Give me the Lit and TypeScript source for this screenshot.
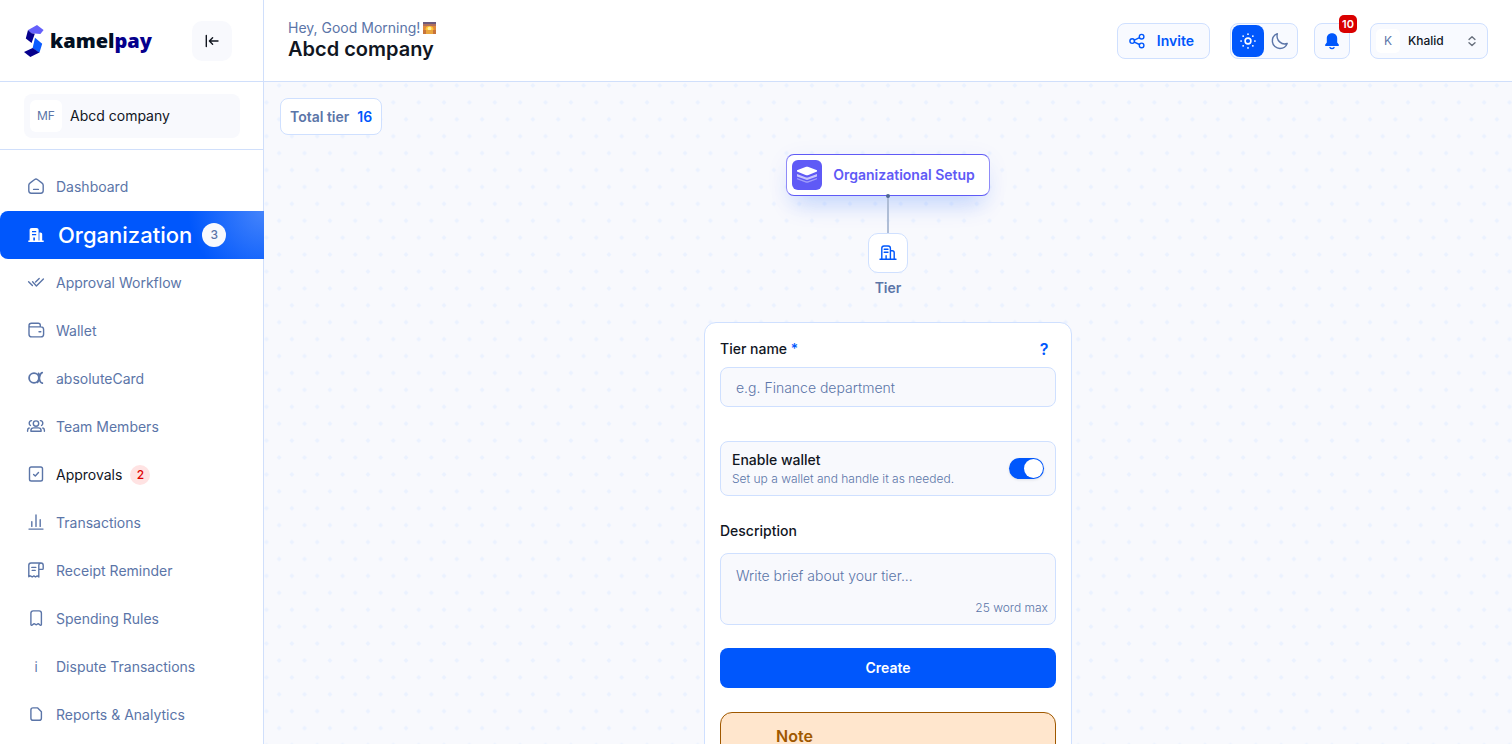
import { LitElement, html, css, svg, nothing } from "lit";
import { customElement, property, state } from "lit/decorators.js";
import { classMap } from "lit/directives/class-map.js";

const icons: Record<string, unknown> = {
  dashboard: svg`<path d="M4.800 10.200c0-.9.4-1.600 1.100-2.100l4.800-3.600c.8-.6 1.800-.6 2.600 0l4.800 3.600c.7.5 1.100 1.200 1.100 2.100v5.600c0 1.400-1 2.400-2.400 2.400H7.200c-1.400 0-2.400-1-2.400-2.400z"/><path d="M9.600 14.400h4.800"/>`,
  organization: svg`<path fill="currentColor" stroke="none" fill-rule="evenodd" d="M5.600 17.600V7.200C5.600 5.800 6.400 5 7.800 5h4.600c1.400 0 2.200.8 2.200 2.200V17.600h.8V9.400h1c1.100 0 1.800.7 1.800 1.800v6.400h1.500V19H4.300v-1.400zM8 8v1.200h4.200V8zm0 3v1.200h4.200V11zm1.300 3.600v3h1.600v-3z"/>`,
  workflow: svg`<path d="M4.600 10.800l3.800 3.800M8.600 10.800l3.800 4.200 7-7M15.200 7.400l-3.600 3.600"/>`,
  wallet: svg`<path d="M5 7.200v8c0 1.700 1 2.700 2.700 2.700h9.200c1.700 0 2.700-1 2.700-2.700v-4.600c0-1.700-1-2.700-2.700-2.700H6.200C5.500 7.900 5 7.300 5 6.600 5 5 6 4.300 7.400 4.300h6.800c1.300 0 2.100.8 2.100 2.100v1.400"/><path d="M15 12.800h1.800"/>`,
  alpha: svg`<circle cx="10" cy="11" r="4.900" stroke-width="1.800"/><path d="M18.200 5.700c-1.800.4-2.400 3-2.900 5.300-.4 2-.8 3.400-1.800 4.400M14.600 6.400c.6 1.400.5 3 .7 4.600.3 2.800 1.100 4.800 3 5.200" stroke-width="1.800"/>`,
  team: svg`<circle cx="12" cy="8.600" r="2.700"/><path d="M6.900 16.200v-.8c0-1.500 1.200-2.500 2.700-2.500h4.800c1.500 0 2.700 1 2.700 2.500v.8zM7.600 5.600c-1.700.2-2.400 1.400-2.400 2.600 0 1 .5 1.800 1.300 2.300M16.400 5.600c1.700.2 2.400 1.400 2.400 2.600 0 1-.5 1.800-1.300 2.300M3.600 16.200v-1c0-1.100.6-1.800 1.600-2.200M20.400 16.200v-1c0-1.100-.6-1.800-1.600-2.200"/>`,
  approvals: svg`<rect x="5.500" y="4" width="13" height="14" rx="1.800"/><path d="M9.600 11.400l1.700 1.600 3.200-3.400"/>`,
  transactions: svg`<path d="M5 18.100h14M7.800 10.600v4.800M12 4v11.400M16.200 8.800v6.600"/>`,
  receipt: svg`<path d="M14.800 18V6.200c0-1.200.8-2.200 2.200-2.200H7C5.500 4 4.800 4.900 4.800 6.300v11.400l1.700-.8 1.700 1.100 1.700-1.100 1.600 1.100 1.700-1.100zM17 4c1.400 0 2.200.9 2.200 2.200V9.500c0 .6-.3.900-.9.900h-3.500M7.800 8.400h4M8.200 11.400h3"/>`,
  bookmark: svg`<path d="M6.900 6.200c0-1.400.8-2.300 2.300-2.300h5.900c1.500 0 2.300.9 2.300 2.300v11.300c0 .8-.5 1-1.100.7-.9-.6-1.300-1.500-2.100-1.500-.9 0-1.300 1.100-2 1.100s-1.200-1.100-2-1.100-1.300.9-2.200 1.500c-.6.3-1.100.1-1.100-.7z"/>`,
  reports: svg`<path d="M6.900 7c0-1.300.8-2.100 2.100-2.100h4.700l3.700 3.800v6.500c0 1.300-.8 2.100-2.100 2.100H9c-1.300 0-2.100-.8-2.100-2.100z"/>`,
  tier: svg`<path d="M4 18.300h16M5.800 18.300V7.200c0-1.500.7-2.200 2.200-2.200h4.200c1.500 0 2.200.7 2.200 2.200v11.100M14.400 9.800h1.800c1.300 0 2 .7 2 2v6.500M8.200 8.300h3.800M8.200 11.300h3.800M10.100 18.300v-3.500"/>`,
  collapse: svg`<path d="M6.300 6.500v11M9.600 12h8.400M12.600 8.800L9.400 12l3.200 3.200"/>`,
  share: svg`<circle cx="7.200" cy="12.100" r="2.300"/><circle cx="16.600" cy="7.700" r="2.300"/><circle cx="16.600" cy="16.400" r="2.300"/><path d="M9.300 11.100l5.200-2.400M9.300 13.100l5.200 2.400"/>`,
  sun: svg`<circle cx="12" cy="12" r="2.900" stroke-width="1.600"/><path stroke-width="1.700" d="M12 5v.2M12 18.800v.2M5 12h.2M18.800 12h.2M7.100 7.100l.1.100M16.800 16.800l.1.100M16.900 7.100l-.1.100M7.200 16.800l-.1.100"/>`,
  moon: svg`<path d="M9.300 4.600C5.800 6.200 4 9.500 4.400 12.800c.5 3.800 3.700 6.700 7.500 6.700 3.300 0 6.200-2 7.300-5-5.300 1.900-11.500-2.900-9.900-9.900z"/>`,
  bell: svg`<path fill="currentColor" stroke="none" d="M12 4.200c-3.200 0-5.200 2.200-5.200 5.200v4.100l-1.500 2c-.5.800-.2 1.500.8 1.500h11.800c1 0 1.300-.7.8-1.500l-1.500-2V9.400c0-3-2-5.200-5.200-5.200z"/><path d="M10 18.600c.8 1.200 3.200 1.200 4 0"/>`,
  updown: svg`<path d="M9 10.400L12 7.700l3 2.700M9 13.800l3 2.700 3-2.700"/>`,
};

@customElement("ui-icon")
class UiIcon extends LitElement {
  static styles = css`
    :host { display: block; flex: none; width: 24px; height: 24px; }
    .glyph { display: block; fill: none; stroke: currentColor; stroke-width: 1.4; stroke-linecap: round; stroke-linejoin: round; }
  `;
  @property() name = "";
  render() {
    return html`<svg class="glyph" width="24" height="24" viewBox="0 0 24 24" aria-hidden="true">${icons[this.name] ?? nothing}</svg>`;
  }
}

interface NavItem { label: string; icon: string; count?: number; active?: boolean; alert?: boolean }

const navItems: NavItem[] = [
  { label: "Dashboard", icon: "dashboard" },
  { label: "Organization", icon: "organization", count: 3, active: true },
  { label: "Approval Workflow", icon: "workflow" },
  { label: "Wallet", icon: "wallet" },
  { label: "absoluteCard", icon: "alpha" },
  { label: "Team Members", icon: "team" },
  { label: "Approvals", icon: "approvals", count: 2, alert: true },
  { label: "Transactions", icon: "transactions" },
  { label: "Receipt Reminder", icon: "receipt" },
  { label: "Spending Rules", icon: "bookmark" },
  { label: "Dispute Transactions", icon: "" },
  { label: "Reports & Analytics", icon: "reports" },
];

@customElement("app-sidebar")
class AppSidebar extends LitElement {
  static styles = css`
    :host { display: flex; flex-direction: column; box-sizing: border-box; min-height: 0; border-right: 1px solid #d0dffb; background: #fff; }
    * { box-sizing: border-box; }
    .brand { flex: none; height: 82px; display: flex; align-items: center; justify-content: space-between; padding: 0 31px 0 24px; border-bottom: 1px solid #d0dffb; }
    .logo { display: flex; align-items: center; gap: 6px; color: #020f22; text-decoration: none; font: 800 20px/32px "Open Sans", "Noto Sans", sans-serif; }
    .pay { color: #06008c; }
    .collapse { width: 40px; height: 40px; display: grid; place-items: center; padding: 0; border: 0; border-radius: 10px; background: #f8f9fd; color: #11161f; }
    .company { flex: none; height: 68px; padding: 12px 23px 11px 24px; border-bottom: 1px solid #d0dffb; }
    .workspace { width: 100%; height: 44px; display: flex; align-items: center; gap: 8px; padding: 6px; border: 0; border-radius: 8px; background: #f8f9fd; color: #11161f; font: 400 14px/20px Inter, sans-serif; }
    .initials { width: 32px; height: 32px; display: grid; place-items: center; border-radius: 6px; background: #fff; color: #5b75a8; font-size: 12px; font-weight: 400; }
    .nav { display: flex; flex-direction: column; margin-right: -1px; padding-top: 13px; }
    .item { flex: none; height: 48px; display: flex; align-items: center; gap: 8px; padding: 0 24px; color: #5b75a8; text-decoration: none; font-size: 14px; line-height: 20px; font-weight: 400; }
    .active { gap: 10px; border-radius: 8px 0 0 8px; background: radial-gradient(circle 84px at 100% 0, #4584fb, #0057fc 90%); color: #fff; font-size: 22px; line-height: 28px; font-weight: 500; }
    .alert .label { color: #11161f; }
    .info { width: 24px; text-align: center; font-size: 13px; }
    .count { width: 24px; height: 24px; display: grid; place-items: center; border-radius: 12px; background: #f8f9fd; color: #5b75a8; font-size: 12px; line-height: 16px; }
    .alert .count { width: 20px; height: 20px; background: #ffe3e3; color: #e00000; font-weight: 500; }
  `;
  render() {
    return html`
      <div class="brand">
        <a class="logo" href="#">
          <svg width="20" height="32" viewBox="0 0 20 32" aria-hidden="true">
            <path fill="#6560fb" d="M4.200 5L13 0l6.600 5-3.200 4-9-.8z"/>
            <path fill="#06008c" d="M4 5l3.600 3.200 3.200.6-3.200 9.200-5.800-4.400z"/>
            <path fill="#0a5cff" d="M11 12.800l7.200 6-2.800 9-6.800-4.600z"/>
            <path fill="#06008c" d="M0 27l8.600-4 6.800 4.600L6.300 32z"/>
          </svg>
          <span>kamel<span class="pay">pay</span></span>
        </a>
        <button class="collapse" aria-label="Collapse sidebar"><ui-icon name="collapse"></ui-icon></button>
      </div>
      <div class="company">
        <button class="workspace"><span class="initials">MF</span>Abcd company</button>
      </div>
      <nav class="nav">
        ${navItems.map((item) => html`
          <a href="#" class=${classMap({ item: true, active: !!item.active, alert: !!item.alert })}>
            ${item.icon ? html`<ui-icon name=${item.icon}></ui-icon>` : html`<span class="info">i</span>`}
            <span class="label">${item.label}</span>
            ${item.count ? html`<span class="count">${item.count}</span>` : nothing}
          </a>`)}
      </nav>
    `;
  }
}

@customElement("app-header")
class AppHeader extends LitElement {
  static styles = css`
    :host { display: flex; align-items: center; justify-content: space-between; box-sizing: border-box; height: 82px; padding: 0 24px; border-bottom: 1px solid #d0dffb; background: #fff; }
    * { box-sizing: border-box; }
    .heading { padding-bottom: 4px; }
    .greeting { display: flex; align-items: center; gap: 3px; margin: 0; color: #5b75a8; font-size: 14px; line-height: 20px; }
    .title { margin: 0; color: #11161f; font-size: 20px; line-height: 22px; font-weight: 600; }
    .actions { display: flex; align-items: center; gap: 20px; }
    .group { display: flex; gap: 16px; }
    .box { height: 36px; display: flex; align-items: center; border: 1px solid #cfe0ff; border-radius: 8px; background: #f8faff; color: #0057fc; font-family: inherit; }
    .invite { gap: 8px; padding: 0 15px 0 7px; font-size: 14px; font-weight: 600; }
    .theme { padding: 1px; }
    .mode { width: 32px; height: 32px; display: grid; place-items: center; padding: 0; border: 0; border-radius: 8px; background: none; color: #5b75a8; }
    .on { background: #0057fc; color: #fff; }
    .bell { position: relative; width: 36px; justify-content: center; padding: 0; }
    .badge { position: absolute; top: -9px; right: -8px; width: 18px; height: 18px; border-radius: 5px; background: #d90000; color: #fff; font-size: 11px; line-height: 18px; font-weight: 600; text-align: center; }
    .user { width: 118px; padding: 0 3px 0 5px; }
    .initial { flex: none; width: 24px; height: 24px; display: grid; place-items: center; border-radius: 5px; background: #fff; color: #5b75a8; font-size: 12px; }
    .name { flex: 1; min-width: 0; height: 32px; padding: 0 0 0 8px; border: 0; appearance: none; background: none; color: #11161f; font: 500 12px/16px Inter, sans-serif; }
    .chevrons { color: #676f7c; }
  `;
  @state() private dark = false;
  render() {
    return html`
      <div class="heading">
        <p class="greeting">Hey, Good Morning!
          <svg width="13" height="12" viewBox="0 0 13 12" role="img" aria-label="Sunrise">
            <path fill="#6c5a7c" d="M0 0h13v3H0z"/><path fill="#b0705d" d="M0 2h13v3H0z"/><path fill="#e08a3c" d="M0 4h13v4H0z"/>
            <path fill="#ffc637" d="M2.500 8a4 4 0 018 0z"/><circle cx="6.500" cy="6.600" r="1.900" fill="#fff09a"/><path fill="#c8743a" d="M0 8h13v4H0z"/><path fill="#e9a63e" d="M3 8h7v4H3z"/>
          </svg>
        </p>
        <h1 class="title">Abcd company</h1>
      </div>
      <div class="actions">
        <button class="box invite"><ui-icon name="share"></ui-icon>Invite</button>
        <div class="group">
          <div class="box theme">
            <button class=${classMap({ mode: true, on: !this.dark })} aria-label="Light mode" @click=${() => (this.dark = false)}><ui-icon name="sun"></ui-icon></button>
            <button class=${classMap({ mode: true, on: this.dark })} aria-label="Dark mode" @click=${() => (this.dark = true)}><ui-icon name="moon"></ui-icon></button>
          </div>
          <button class="box bell" aria-label="Notifications"><ui-icon name="bell"></ui-icon><span class="badge">10</span></button>
        </div>
        <label class="box user">
          <span class="initial">K</span>
          <select class="name" aria-label="Account"><option>Khalid</option></select>
          <ui-icon class="chevrons" name="updown"></ui-icon>
        </label>
      </div>
    `;
  }
}

@customElement("tier-form")
class TierForm extends LitElement {
  static styles = css`
    :host { display: block; box-sizing: border-box; width: 368px; max-width: 100%; padding: 15px; border: 1px solid #cfe0ff; border-radius: 12px; background: #fff; color: #11161f; }
    * { box-sizing: border-box; }
    .form { display: flex; flex-direction: column; font-size: 14px; line-height: 20px; }
    .row { display: flex; align-items: center; justify-content: space-between; height: 22px; margin-bottom: 7px; }
    .caption { font-weight: 500; }
    .star { color: #0057fc; }
    .help { width: 24px; height: 24px; padding: 0; border: 0; background: none; color: #0057fc; font: 600 16px/24px Inter, sans-serif; }
    .field { border: 1px solid #cfe0ff; border-radius: 8px; background: #f8f9fd; color: #11161f; font: 400 14px/20px Inter, sans-serif; }
    .field::placeholder { color: #5b75a8; opacity: 1; font-weight: 300; }
    .name { width: 100%; height: 40px; padding: 0 15px; }
    .wallet { display: flex; align-items: center; justify-content: space-between; height: 55px; margin: 34px 0 25px; padding: 0 11px; }
    .hint { display: block; color: #5b75a8; font-size: 12px; line-height: 18px; font-weight: 300; }
    .switch { position: relative; width: 35px; height: 21px; margin: 0; appearance: none; border-radius: 11px; background: #c3cfe3; box-shadow: 0 1px 3px #0000001a; }
    .switch::after { content: ""; position: absolute; top: 1px; left: 1px; width: 19px; height: 19px; border-radius: 10px; background: #fff; }
    .switch:checked { background: #0057fc; }
    .switch:checked::after { left: 15px; }
    .area { position: relative; display: flex; margin: 12px 0 23px; }
    .description { width: 100%; height: 72px; padding: 12px 15px; resize: none; }
    .limit { position: absolute; right: 8px; bottom: 8px; color: #5b75a8; font-size: 12px; line-height: 18px; font-weight: 300; }
    .create { height: 40px; border: 0; border-radius: 8px; background: #0057fc; color: #fff; font: 600 14px/20px Inter, sans-serif; }
    .note { margin-top: 24px; padding: 11px 55px 48px; border: 1px solid #9f5800; border-radius: 12px; background: #ffe6cd; color: #9f5800; }
    .heading { margin: 0; font-size: 16px; line-height: 24px; font-weight: 600; }
  `;
  render() {
    return html`
      <form class="form" @submit=${(e: Event) => e.preventDefault()}>
        <div class="row">
          <label class="caption" for="tier-name">Tier name <span class="star">*</span></label>
          <button class="help" type="button" aria-label="Help">?</button>
        </div>
        <input id="tier-name" class="field name" placeholder="e.g. Finance department" />
        <div class="field wallet">
          <label for="wallet"><span class="caption">Enable wallet</span><span class="hint">Set up a wallet and handle it as needed.</span></label>
          <input id="wallet" class="switch" type="checkbox" checked />
        </div>
        <label class="caption" for="description">Description</label>
        <div class="area">
          <textarea id="description" class="field description" placeholder="Write brief about your tier..."></textarea>
          <span class="limit">25 word max</span>
        </div>
        <button class="create" type="submit">Create</button>
        <section class="note"><h2 class="heading">Note</h2></section>
      </form>
    `;
  }
}

@customElement("app-root")
class AppRoot extends LitElement {
  static styles = css`
    :host { display: grid; grid-template-columns: 264px minmax(0, 1fr); height: 100vh; overflow: hidden; background: #f8f9fd; font-family: Inter, sans-serif; }
    * { box-sizing: border-box; }
    .sidebar { z-index: 1; }
    .page { display: flex; flex-direction: column; min-width: 0; min-height: 0; }
    .canvas { position: relative; flex: 1; min-height: 0; overflow: auto; scrollbar-width: none; padding: 16px; }
    .dots { position: absolute; inset: 0; width: 100%; height: 100%; }
    .content { position: relative; display: flex; flex-direction: column; }
    .total { align-self: flex-start; display: flex; align-items: center; gap: 8px; height: 37px; padding: 0 9px; border: 1px solid #cfe0ff; border-radius: 8px; background: #fff; color: #5b75a8; font-size: 14px; line-height: 20px; font-weight: 600; }
    .value { color: #0057fc; }
    .tree { display: flex; flex-direction: column; align-items: center; padding-top: 19px; }
    .root { height: 42px; display: flex; align-items: center; gap: 11px; padding: 0 14px 0 5px; border: 1px solid #5f5af6; border-left-color: #8f8bf8; border-right-color: #8f8bf8; border-radius: 8px; background: #fff; color: #5f5af6; box-shadow: 0 16px 24px -8px #0057fc33, 0 4px 24px #0057fc0f; font: 600 14px/20px Inter, sans-serif; }
    .layers { width: 30px; height: 30px; border-radius: 6px; background: #5f5af6; }
    .link { position: relative; width: 2px; height: 37px; background: #afbdd6; }
    .link::before { content: ""; position: absolute; top: -2px; left: -1px; width: 4px; height: 4px; border-radius: 2px; background: #4f6793; }
    .node { width: 40px; height: 40px; display: grid; place-items: center; padding: 0; border: 1px solid #cfe0ff; border-radius: 10px; background: #fff; color: #0057fc; }
    .caption { margin: 5px 0 24px; color: #5b75a8; font-size: 14px; line-height: 20px; font-weight: 600; }
  `;
  render() {
    return html`
      <app-sidebar class="sidebar"></app-sidebar>
      <div class="page">
        <app-header></app-header>
        <main class="canvas">
          <svg class="dots" aria-hidden="true">
            <defs>
              <pattern id="grid" width="30" height="40" patternUnits="userSpaceOnUse" patternTransform="translate(2.500 -5) scale(.8456)">
                <path fill="#ebf2ff" d="M15 7.200l2.900 2.800-2.900 2.900-2.900-2.900zM0 27.200L2.900 30 0 32.900zM30 27.200L27.100 30l2.900 2.900z"/>
              </pattern>
            </defs>
            <rect width="100%" height="100%" fill="url(#grid)"/>
          </svg>
          <div class="content">
            <div class="total">Total tier <span class="value">16</span></div>
            <div class="tree">
              <button class="root">
                <svg class="layers" viewBox="0 0 30 30" aria-hidden="true">
                  <path fill="#fff" fill-opacity=".4" d="M5 18l8.500 3c1 .4 2 .4 3 0L25 18v1.200l-8.500 3.200c-1 .4-2 .4-3 0L5 19.200z"/>
                  <path fill="#fff" fill-opacity=".65" d="M5 14l8.500 3.200c1 .4 2 .4 3 0L25 14v2.400l-8.500 3.200c-1 .4-2 .4-3 0L5 16.400z"/>
                  <path fill="#fff" d="M5 10.200l8.500-3.100c1-.4 2-.4 3 0l8.500 3.100v1.200l-8.500 3.500c-1 .4-2 .4-3 0L5 11.400z"/>
                </svg>
                Organizational Setup
              </button>
              <div class="link"></div>
              <button class="node" aria-label="Tier"><ui-icon name="tier"></ui-icon></button>
              <p class="caption">Tier</p>
              <tier-form></tier-form>
            </div>
          </div>
        </main>
      </div>
    `;
  }
}
